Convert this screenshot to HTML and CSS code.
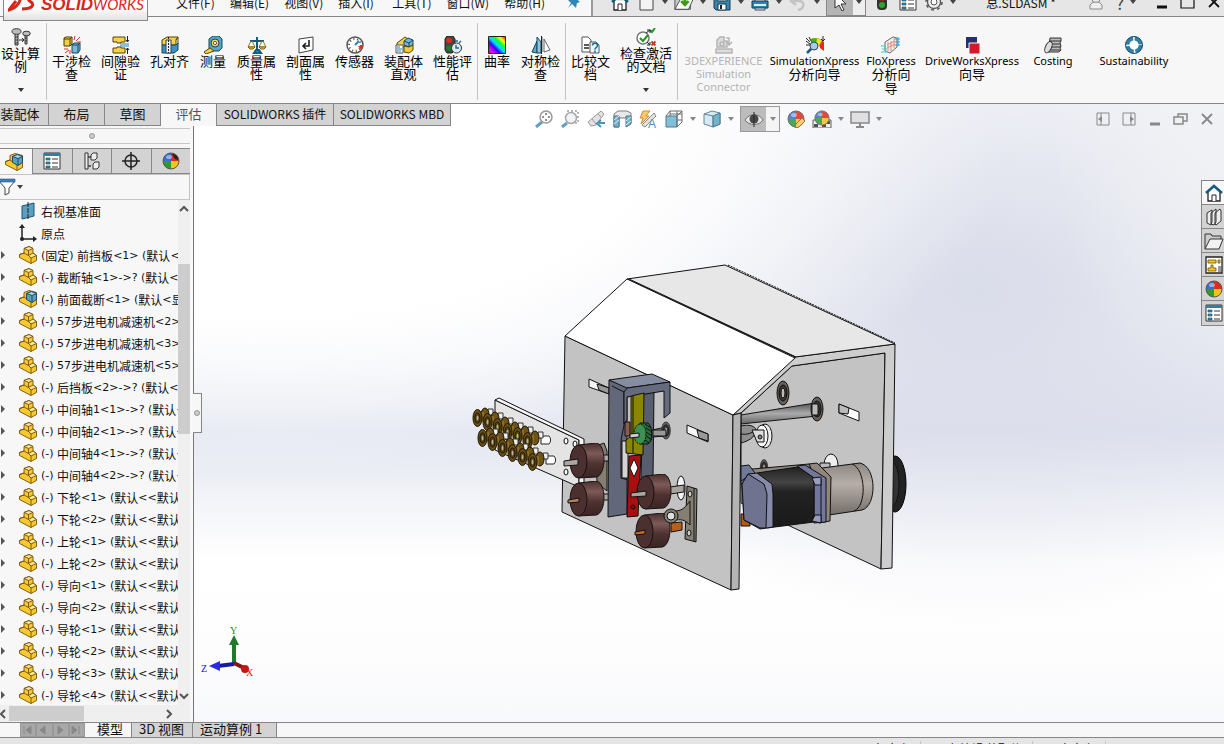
FILE: index.html
```html
<!DOCTYPE html>
<html lang="zh-CN">
<head>
  <meta charset="UTF-8">
  <meta name="viewport" content="width=device-width, initial-scale=1.0">
  <title>SOLIDWORKS - 总.SLDASM</title>
  <link rel="stylesheet" href="styles.css">
</head>
<body>

<!-- Icon sprite -->
<svg class="sprite" aria-hidden="true">
  <defs>
    <linearGradient id="rainbow" x1="0" y1="1" x2="1" y2="0"><stop offset="0" stop-color="#f00"/><stop offset=".15" stop-color="#f0f"/><stop offset=".35" stop-color="#30f"/><stop offset=".5" stop-color="#0df"/><stop offset=".65" stop-color="#0f4"/><stop offset=".8" stop-color="#ff0"/><stop offset="1" stop-color="#f00"/></linearGradient>
    <linearGradient id="drumFill" x1="0" y1="0" x2="0" y2="1"><stop offset="0" stop-color="#4a3030"/><stop offset=".3" stop-color="#7d5a58"/><stop offset=".6" stop-color="#4d3231"/><stop offset="1" stop-color="#3a2424"/></linearGradient>
    <linearGradient id="shaftFill" x1="0" y1="0" x2="0" y2="1"><stop offset="0" stop-color="#555"/><stop offset=".5" stop-color="#aaa"/><stop offset="1" stop-color="#666"/></linearGradient>
    <linearGradient id="gearboxFill" x1="0" y1="0" x2="0" y2="1"><stop offset="0" stop-color="#8c8580"/><stop offset=".4" stop-color="#b5aea9"/><stop offset="1" stop-color="#746d68"/></linearGradient>
    <linearGradient id="motorFill" x1="0" y1="0" x2="0" y2="1"><stop offset="0" stop-color="#222"/><stop offset=".25" stop-color="#444"/><stop offset=".4" stop-color="#222"/><stop offset="1" stop-color="#1a1a1a"/></linearGradient>
  </defs>

  <symbol id="i-bolt" viewBox="0 0 20 18"><g stroke="#333" fill="#bbb"><path d="M4 6v11h3V6M4 9h3M4 12h3M4 15h3M14 7v9h2V7M14 10h2M14 13h2"/><ellipse cx="5.500" cy="3.500" rx="4.500" ry="2.800"/><ellipse cx="15.500" cy="5.500" rx="3.800" ry="2.300"/></g><path d="M8 12h5M11 10l2 2-2 2" stroke="#222" fill="none"/></symbol>
  <symbol id="i-interfere" viewBox="0 0 18 18"><path d="M1 2l2-1h6v7l-2 2H1z" fill="#f4cf45" stroke="#4c3c00"/><path d="M1 3h6v7M7 3l2-2" fill="none" stroke="#4c3c00"/><path d="M9 9l2-2h6v7l-2 3H9z" fill="#78b8d4" stroke="#124761"/><path d="M9 9h6v8M15 9l2-2" fill="none" stroke="#124761"/><path d="M11 4l1-4M13 5l4-4M14 6h4M1 13h4M2 17l4-3M7 14v4" stroke="#e03020"/></symbol>
  <symbol id="i-clear" viewBox="0 0 18 18"><path d="M1 1h12v5H9v1H5V6H1zM1 17v-5h4v-1h4v1h4v5z" fill="#f5d04a" stroke="#5a4500"/><path d="M8 8h9M8 10h9" stroke="#2a85b5"/><path d="M15.500 0v6M14 4l1.500 2L17 4M15.500 18v-6M14 14l1.500-2L17 14" stroke="#222" fill="none"/></symbol>
  <symbol id="i-hole" viewBox="0 0 18 18"><path d="M1 4l5-3h11l-2 3v5H1z" fill="#f5d04a" stroke="#5a4500"/><path d="M1 9h14l2-2v7l-4 3H1z" fill="#3f92b8" stroke="#124761"/><path d="M5 4h5v13H5z" fill="#eef4f7" stroke="#345"/><path d="M7.500 1v16" stroke="#222" stroke-dasharray="2 1"/><path d="M15 4l2-3v7" fill="none" stroke="#5a4500"/></symbol>
  <symbol id="i-tape" viewBox="0 0 18 18"><path d="M5 3l4-3h6l3 3v9l-3 3H5z" fill="#5aa3c5" stroke="#124761"/><circle cx="11" cy="7" r="4" fill="#f3d36a" stroke="#124761"/><circle cx="11" cy="7" r="1.600" fill="#fff" stroke="#555"/><path d="M6 12l-6 4 2 2 8-3z" fill="#f5d04a" stroke="#5a4500"/></symbol>
  <symbol id="i-scale" viewBox="0 0 18 18"><path d="M9 1v14M2 5h14M6 17h7l-2-3H8z" stroke="#145b80" stroke-width="2" fill="#3f92b8"/><path d="M3 5L0 11h7L4 5M14 5l-3 6h7l-3-6" fill="none" stroke="#9a7a20"/><path d="M0 11h7l-2 2H2zM11 11h7l-2 2h-3z" fill="#f5d04a" stroke="#7a5c00"/></symbol>
  <symbol id="i-section" viewBox="0 0 18 18"><path d="M2 3l14-2v13L2 17z" fill="#fff" stroke="#444"/><path d="M12 4v6H7M9 7l-3 3 3 3" fill="none" stroke="#222" stroke-width="1.600"/></symbol>
  <symbol id="i-gauge" viewBox="0 0 18 18"><circle cx="9" cy="9" r="8" fill="#fff" stroke="#555" stroke-width="1.500"/><circle cx="9" cy="9" r="6" fill="none" stroke="#444" stroke-dasharray="1 2.700" stroke-width="2"/><path d="M9 9l4-4" stroke="#1d84b5" stroke-width="2"/><path d="M12 10h5l-2 4z" fill="#e03020"/></symbol>
  <symbol id="i-visual" viewBox="0 0 18 18"><path d="M6 4l4-3 3 2v8H2V7z" fill="#f5d04a" stroke="#5a4500"/><path d="M9 5l4-3 5 2v5l-4 2-5-2z" fill="#78b8d4" stroke="#124761"/><path d="M9 5l5 2v4M14 7l4-3" fill="none" stroke="#124761"/><path d="M9 10l5 1 4-2v5l-4 3-5-1z" fill="#f5c83a" stroke="#5a4500"/><path d="M1 9h7v8H1z" fill="#fff" stroke="#555"/><path d="M2 11h3M2 13h5M2 15h4" stroke="#1d84b5"/></symbol>
  <symbol id="i-perf" viewBox="0 0 18 18"><path d="M3 0h6l2 3v11l-3 3H3l-2-3V3z" fill="#444" stroke="#222"/><circle cx="5" cy="4.500" r="2.800" fill="#e02a1a"/><circle cx="5" cy="12" r="2.800" fill="#16831e"/><circle cx="12.500" cy="12" r="5" fill="#dcecf3" stroke="#333"/><path d="M12 9v3h3M11 5h3M15 7l2-2" stroke="#1b6a90" stroke-width="1.500" fill="none"/></symbol>
  <symbol id="i-curv" viewBox="0 0 18 18"><path d="M.5.500h17v17h-17z" fill="url(#rainbow)" stroke="#222"/></symbol>
  <symbol id="i-mirror" viewBox="0 0 20 18"><path d="M1 16L6 5v12z" fill="#5fa8c9" stroke="#124761"/><path d="M6 17V1l4 5v11z" fill="#8fc4dc" stroke="#124761"/><path d="M11 1v15M13 3v13l6-2z" fill="#fff" stroke="#666"/><path d="M10.500 0v18" stroke="#222"/></symbol>
  <symbol id="i-compare" viewBox="0 0 20 18"><path d="M1 1h6l3 3v12H1z" fill="#fff" stroke="#555"/><path d="M9 6h6l3 3v8H9z" fill="#eef4f7" stroke="#555"/><path d="M3 9h5M3 12h5" stroke="#222" stroke-width="1.500"/><path d="M11.500 9.500c0-3 5-3 5 0 0 2-2.500 2-2.500 4M14 14.500v2" fill="none" stroke="#0f6e9e" stroke-width="1.600"/></symbol>
  <symbol id="i-active" viewBox="0 0 20 18"><circle cx="7" cy="10" r="6" fill="#fff" stroke="#777" stroke-width="1.500"/><path d="M4 10l3 3 5-6M14 2l2 2 3-4" fill="none" stroke="#1f951f" stroke-width="2"/><path d="M10 5l4-3M11 14l3 3M11 2h3v3M14 14v3h-3" stroke="#222" fill="none"/><path d="M15.500 13.500l4 4M19.500 13.500l-4 4" stroke="#d8301c" stroke-width="1.800"/></symbol>
  <symbol id="i-3dx" viewBox="0 0 18 18"><g fill="#ddd" stroke="#b5b5b5" stroke-width="1.500"><path d="M2 4l3-3h4v4h3v6H2zM1 13h16v4H1z"/><path d="M11 2h3v6M12 6l2 3 3-3" fill="none"/><circle cx="7" cy="8" r="2"/></g></symbol>
  <symbol id="i-simx" viewBox="0 0 20 18"><path d="M6 3c5-2 9-1 13 3v9l-4-3c0-4-3-5-9-4z" fill="#e52a1a"/><path d="M6 3c5-2 8-1 11 1.500l-3 5.500-8-2z" fill="#f5e01a"/><path d="M6 3c2-1 4-1 6-.5L11 8H6z" fill="#35b52c"/><path d="M18 0v4M16 3l2 2 2-2M1 2l4 4M1 5l4 3M1 9h4M4 1l2 4" stroke="#222" fill="none"/><circle cx="9" cy="10" r="4" fill="#a9cbe8" stroke="#345"/><path d="M6 13l-4 4" stroke="#145b80" stroke-width="2.500"/></symbol>
  <symbol id="i-flox" viewBox="0 0 20 18"><path d="M4 6l8-5 4 1v9l-7 6-5-2z" fill="#f2f2f2" stroke="#666"/><path d="M7 6v9M10 5v10M13 3v9M6 9l8-4M6 12l8-4" stroke="#e08a7a"/><path d="M13 3h6M14 6h5M14 9h5M17 1v9" stroke="#2aa0e0"/><path d="M0 10h5M1 13h5M0 16h6" stroke="#3cc"/></symbol>
  <symbol id="i-drive" viewBox="0 0 18 18"><path d="M3 1h11v11H3z" fill="#25306f"/><path d="M6 7h11v11H6z" fill="#d5172c" stroke="#f7f7f7"/></symbol>
  <symbol id="i-cost" viewBox="0 0 20 18"><path d="M7 2h11v3l-1 2 1 3-1 2 1 2-2 2H5z" fill="#bbb" stroke="#333"/><path d="M7 5h11M8 8h9M7 11h11M8 14h9" stroke="#333"/><ellipse cx="5.500" cy="11" rx="3" ry="6" transform="rotate(25 5 11)" fill="#ddd" stroke="#333"/></symbol>
  <symbol id="i-sust" viewBox="0 0 18 18"><circle cx="9" cy="9" r="6.500" fill="#fff" stroke="#2f7fa8" stroke-width="4" stroke-dasharray="8.500 1.700"/><circle cx="9" cy="9" r="8.500" fill="none" stroke="#174861"/><path d="M9 4l2 3 3 2-3 2-2 3-2-3-3-2 3-2z" fill="#fff"/></symbol>

  <symbol id="i-zoom" viewBox="0 0 18 18"><path d="M1 17l6-5" stroke="#4b8fb0" stroke-width="3"/><circle cx="11" cy="7" r="6" fill="#fafafa" stroke="#888" stroke-width="1.500"/><path d="M11 3v2M11 9v2M7 7h2M13 7h2" stroke="#555" stroke-width="1.500"/></symbol>
  <symbol id="i-zoomarea" viewBox="0 0 18 18"><path d="M6 1h11v12h-3" fill="none" stroke="#555" stroke-dasharray="2 2"/><path d="M1 17l5-4" stroke="#4b8fb0" stroke-width="3"/><circle cx="10" cy="8" r="5.500" fill="#eef3f5" stroke="#999" stroke-width="1.500"/></symbol>
  <symbol id="i-prev" viewBox="0 0 18 18"><path d="M1 12L14 1l3 3-8 11-5 1z" fill="#ddd" stroke="#888"/><path d="M5 9l4 5M11 4l3 3" stroke="#888"/><path d="M18 13h-6M14 10l-4 3.500 4 3.500" fill="none" stroke="#2f7fa8" stroke-width="2"/></symbol>
  <symbol id="i-cut" viewBox="0 0 18 18"><path d="M1 4l4-3h9l4 2v10l-4 3v-8H6v9H1z" fill="#e4e4e4" stroke="#666"/><path d="M1 6h5v11H1zM13 6h5v8l-5 3z" fill="#5ca5c5" stroke="#2b6380"/><path d="M1 10l5-4M1 14l5-4M13 11l5-4M13 15l5-4" stroke="#dcecf3"/></symbol>
  <symbol id="i-annot" viewBox="0 0 18 18"><path d="M4 1h7L7 6h3l-8 8 2-6H1z" fill="#f6c050" stroke="#c87a20"/><path d="M3 15L15 3l2 3L6 17z" fill="#ddd" stroke="#777"/><text x="9" y="18" font-size="12" font-family="Liberation Sans" fill="#2f7fa8">A</text></symbol>
  <symbol id="i-orient" viewBox="0 0 18 18"><path d="M1 6h11v11H1z" fill="#6fb3d0" stroke="#2b6380"/><path d="M1 6l4-5h12v11l-5 5M12 6l5-5M5 1v5M12 1v16M5 4h12M12 10h5" fill="none" stroke="#555"/></symbol>
  <symbol id="i-style" viewBox="0 0 18 18"><path d="M1 4l8-3 8 2v11l-7 3-9-3z" fill="#cfe6f0" stroke="#4c7287"/><path d="M10 6l7-3v11l-7 3z" fill="#5ca5c5" stroke="#2b6380"/><path d="M1 4l9 2v11" fill="none" stroke="#4c7287"/></symbol>
  <symbol id="i-eye" viewBox="0 0 18 18"><path d="M0 10c4-7 14-7 18 0-4 6-14 6-18 0z" fill="#eee" stroke="#666"/><circle cx="9" cy="9" r="4.500" fill="#333"/><path d="M9 2v15" stroke="#111"/></symbol>
  <symbol id="i-ball" viewBox="0 0 18 18"><path d="M9 9V1a8 8 0 0 0-8 8z" fill="#3a6fd0"/><path d="M9 9V1a8 8 0 0 1 8 8z" fill="#df2a1c"/><path d="M9 9H1a8 8 0 0 0 8 8z" fill="#2d9a35"/><path d="M9 9h8a8 8 0 0 1-8 8z" fill="#f3c421"/><circle cx="9" cy="9" r="8" fill="none" stroke="#555"/><ellipse cx="7" cy="5" rx="3" ry="2" fill="#fff" opacity=".45"/></symbol>
  <symbol id="i-ballhole" viewBox="0 0 18 18"><use href="#i-ball"/><path d="M10 2c3 0 6 2 6 6l-3-1z" fill="#222"/></symbol>
  <symbol id="i-appear" viewBox="0 0 18 18"><use href="#i-ball"/><path d="M8 18l1-4 6-6 3 3-6 6z" fill="#f6c860" stroke="#8a5a10"/></symbol>
  <symbol id="i-scene" viewBox="0 0 18 18"><path d="M0 10h18v8H0z" fill="#eee" stroke="#444"/><path d="M1 14h4v3H1zM9 14h4v3H9zM14 11h3v3h-3z" fill="#333"/><use href="#i-ball" x="1" width="16" height="16"/></symbol>
  <symbol id="i-monitor" viewBox="0 0 18 18"><path d="M0 2h18v11H0z" fill="#ddd" stroke="#777" stroke-width="1.500"/><path d="M9 13v3M5 17h8" stroke="#777" stroke-width="2"/></symbol>

  <symbol id="i-home" viewBox="0 0 18 18"><path d="M3 8v9h12V8" fill="#fff" stroke="#222" stroke-width="1.300"/><path d="M7 17v-6h4v6" fill="#fff" stroke="#222"/><path d="M1 9l8-7 8 7" fill="none" stroke="#145b80" stroke-width="2.500"/></symbol>
  <symbol id="i-new" viewBox="0 0 18 18"><path d="M3 1h9l4 4v12H3z" fill="#f4f4f4" stroke="#444"/></symbol>
  <symbol id="i-open" viewBox="0 0 22 18"><path d="M1 17V4h7l1 2h9v11z" fill="#ccc" stroke="#444"/><path d="M1 17L7 6h14l-5 11z" fill="#fafafa" stroke="#444"/><path d="M12 3v8M8 8l4 4 4-4" stroke="#3a9a10" stroke-width="3" fill="none"/></symbol>
  <symbol id="i-save" viewBox="0 0 18 18"><path d="M1 1h16v16H3l-2-2z" fill="#3b84a8" stroke="#123c52"/><path d="M4 1h10v7H4z" fill="#e8e8e8" stroke="#123c52"/><path d="M5 11h8v6H5z" fill="#fff" stroke="#123c52"/><path d="M7 12h2v4H7z" fill="#222"/></symbol>
  <symbol id="i-print" viewBox="0 0 18 18"><path d="M4 2h10v7H4zM4 14h10v3H4z" fill="#fff" stroke="#345"/><path d="M1 8h16v7H1z" fill="#2f86ad" stroke="#123c52"/><path d="M3 12h12" stroke="#d8eef7" stroke-width="2"/></symbol>
  <symbol id="i-undo" viewBox="0 0 18 18"><path d="M9 17c7-1 7-9 1-9H3M7 4L2 8l5 4" fill="none" stroke="#c4c4c4" stroke-width="2.500"/></symbol>
  <symbol id="i-cursor" viewBox="0 0 18 18"><path d="M4 0v15l4-3 3 6 2-1-3-6h5z" fill="#fff" stroke="#333"/></symbol>
  <symbol id="i-light" viewBox="0 0 18 18"><rect x="4" y="-4" width="10" height="21" rx="4" fill="#333"/><circle cx="9" cy="5" r="3" fill="#a22"/><circle cx="9" cy="12" r="3" fill="#27a827"/></symbol>
  <symbol id="i-list" viewBox="0 0 18 18"><path d="M1 1h16v16H1z" fill="#fff" stroke="#333"/><path d="M1 2.500h16" stroke="#2f7fa8" stroke-width="3"/><path d="M3 6h4v2H3zM3 10h4v2H3zM3 14h4v2H3z" fill="#3f92b8" stroke="#123c52" stroke-width=".6"/><path d="M9 7h6M9 11h6M9 15h6" stroke="#333"/></symbol>
  <symbol id="i-gear" viewBox="0 0 18 18"><circle cx="9" cy="9" r="6.500" fill="#eee" stroke="#555" stroke-width="1.300"/><circle cx="9" cy="9" r="8" fill="none" stroke="#555" stroke-width="1.500" stroke-dasharray="3 3.280"/><circle cx="9" cy="9" r="3" fill="#fff" stroke="#555"/></symbol>
  <symbol id="i-pin" viewBox="0 0 14 18"><path d="M5 3l7 6-3 1-1 5-4-4-4 4 3-5-3-3 5-1z" fill="#2f86b5"/></symbol>
  <symbol id="i-user" viewBox="0 0 18 18"><circle cx="9" cy="6" r="4" fill="#eee" stroke="#888"/><path d="M3 16v-4c2-4 10-4 12 0v4z" fill="#eee" stroke="#888"/></symbol>
  <symbol id="i-min" viewBox="0 0 18 18"><path d="M4 14h10" stroke="currentColor" stroke-width="3"/></symbol>
  <symbol id="i-max" viewBox="0 0 18 18"><path d="M2 3h13v12H2z" fill="none" stroke="currentColor" stroke-width="1.200"/></symbol>
  <symbol id="i-close" viewBox="0 0 18 18"><path d="M4 4l10 10M14 4L4 14" stroke="currentColor" stroke-width="1.800"/></symbol>
  <symbol id="i-restore" viewBox="0 0 18 18"><path d="M2 7h9v7H2zM6 7V4h9v7h-4" fill="none" stroke="currentColor" stroke-width="1.500"/></symbol>
  <symbol id="i-dockl" viewBox="0 0 18 18"><path d="M3 3h12v12H3zM7 3v12" fill="none" stroke="currentColor"/><path d="M8 6v6L4 9z" fill="currentColor"/></symbol>
  <symbol id="i-dockr" viewBox="0 0 18 18"><path d="M3 3h12v12H3zM11 3v12" fill="none" stroke="currentColor"/><path d="M10 6v6l4-3z" fill="currentColor"/></symbol>

  <symbol id="i-part" viewBox="0 0 18 18"><g stroke="#6f5210" stroke-width=".9" stroke-linejoin="round"><path d="M.5 8.500L5 7V2.500L10 .5l4 2V7l3.500 2.500v5L12 17.500.5 11.500z" fill="#f7c92c"/><path d="M5 2.500L10 .5l4 2-4.500 2z" fill="#fbe48a"/><path d="M9.500 9.500L14 7l3.500 2.500L12 12z" fill="#fbe48a"/><path d="M.5 8.500L5 7l4.500 2.500M9.500 4.500v5L12 12v5.500" fill="none"/></g></symbol>
  <symbol id="i-asm" viewBox="0 0 18 18"><g stroke="#6f5210" stroke-width=".9" stroke-linejoin="round"><path d="M.5 8.500L5 7V2.500L10 .5l7.500 2v12L12 17.500.5 11.500z" fill="#f7c92c"/><path d="M.5 8.500L5 7l7 5v5.500" fill="none"/></g><g stroke="#124761" stroke-width=".9"><path d="M7.500 3.500l5-2 5 2v6l-4.500 3-5.500-3z" fill="#5b9fc0"/><path d="M7.500 3.500l5-2 5 2-4.500 2z" fill="#a9d3e6"/><path d="M13 5.500v7" fill="none"/></g></symbol>
  <symbol id="i-plane" viewBox="0 0 18 18"><path d="M3 4l12-3v13L3 17z" fill="#5b9fbe" stroke="#1b5472"/><path d="M9 0v18" stroke="#222" stroke-dasharray="5 1"/></symbol>
  <symbol id="i-origin" viewBox="0 0 18 18"><path d="M3 3v12h13" fill="none" stroke="#222" stroke-width="1.500"/><path d="M0 4l3-4 3 4zM14 12l4 3-4 3z" fill="#222"/><circle cx="3" cy="15" r="2" fill="#222"/></symbol>
  <symbol id="i-config" viewBox="0 0 18 18"><path d="M3 1v16M3 5h5M3 14h5" stroke="#444" stroke-width="1.500" fill="none"/><path d="M2 1h3v16H2zM8 3l2-2h4v5l-2 2H8zM10 12l2-2h4v5l-2 2h-4z" fill="#eee" stroke="#333"/></symbol>
  <symbol id="i-target" viewBox="0 0 18 18"><circle cx="9" cy="9" r="6" fill="none" stroke="#222" stroke-width="1.500"/><path d="M9 0v18M0 9h18" stroke="#222" stroke-width="1.500"/></symbol>
  <symbol id="i-filter" viewBox="0 0 18 18"><path d="M1 3h16l-6 7v5l-4 2v-7z" fill="#fff" stroke="#444"/><path d="M1 1h16v3H1z" fill="#2f8ab5" stroke="#145b80" stroke-width=".6"/></symbol>
  <symbol id="i-books" viewBox="0 0 18 18"><path d="M2 5l5-3v12l-1 3-4-2zM6 5l5-4v13l-2 3-3-1zM10 5l5-4 1 2v10l-5 4-1-1z" fill="#eee" stroke="#333"/></symbol>
  <symbol id="i-folder" viewBox="0 0 20 18"><path d="M1 17V2h6l1 2h9v3" fill="#ccc" stroke="#333"/><path d="M1 17L6 7h13l-4 10z" fill="#f2f2f2" stroke="#333"/></symbol>
  <symbol id="i-palette" viewBox="0 0 18 18"><path d="M1 1h16v16H1z" fill="#fff" stroke="#222" stroke-width="1.300"/><path d="M3 4h8v3H3zM13 4h2v3h-2zM3 15v-3h3V9h2v3h3v3z" fill="#f5c71e" stroke="#6b4c00" stroke-width=".8"/><path d="M13 10h3v6h-3z" fill="#999"/></symbol>

  <symbol id="m-roller" viewBox="0 0 22 20" overflow="visible"><path d="M15 1h5v6h-5z" fill="#eee" stroke="#333"/><ellipse cx="12" cy="7" rx="4" ry="7" fill="#6e5418" stroke="#1c1504"/><path d="M5 5l6-1v9l-6 2z" fill="#8f7022"/><ellipse cx="4.500" cy="10" rx="4.500" ry="8.500" fill="#6a5015" stroke="#1c1504"/><ellipse cx="4.500" cy="10" rx="2.500" ry="5" fill="#54400f" stroke="#1c1504"/><ellipse cx="4.500" cy="10" rx="1" ry="2.500" fill="#b7b2a4"/></symbol>
  <symbol id="m-drum" viewBox="0 0 35 36"><path d="M9 2l18-2c10 2 10 31 0 34L9 35z" fill="url(#drumFill)" stroke="#1c1010"/><ellipse cx="9" cy="18.500" rx="8.500" ry="16.500" fill="#4b302f" stroke="#1c1010"/></symbol>
  <symbol id="m-bearing" viewBox="0 0 14 26"><ellipse cx="7" cy="13" rx="6" ry="12" fill="#665f58" stroke="#111"/><ellipse cx="7" cy="13" rx="4" ry="8" fill="#3a3633" stroke="#111"/><ellipse cx="7" cy="13" rx="2" ry="5" fill="#bbb" stroke="#111"/></symbol>
</svg>

<header class="titlebar">
  <a class="brand" href="#" aria-label="SOLIDWORKS">
    <svg width="30" height="20" viewBox="0 0 30 20" fill="none" stroke="#d9261c" stroke-width="3"><path d="M4 2c8-1 10 3 6 8-2 3-5 5-9 6L8 7M28 2c-8 0-10 3-5 6 4 3 1 7-9 7"/></svg>
    <span><b>SOLID</b><i>WORKS</i></span>
  </a>
  <nav class="menu">
    <a href="#">文件(F)</a>
    <a href="#">编辑(E)</a>
    <a href="#">视图(V)</a>
    <a href="#">插入(I)</a>
    <a href="#">工具(T)</a>
    <a href="#">窗口(W)</a>
    <a href="#">帮助(H)</a>
    <button aria-label="固定"><svg class="ico"><use href="#i-pin"/></svg></button>
  </nav>
  <div class="quickbar">
    <button aria-label="主页"><svg class="ico"><use href="#i-home"/></svg></button>
    <button class="drop" aria-label="新建"><svg class="ico"><use href="#i-new"/></svg></button>
    <button class="drop" aria-label="打开"><svg class="ico"><use href="#i-open"/></svg></button>
    <button class="drop" aria-label="保存"><svg class="ico"><use href="#i-save"/></svg></button>
    <button class="drop" aria-label="打印"><svg class="ico"><use href="#i-print"/></svg></button>
    <button class="drop" aria-label="撤销"><svg class="ico"><use href="#i-undo"/></svg></button>
    <button class="drop pressed" aria-label="选择"><svg class="ico"><use href="#i-cursor"/></svg></button>
    <button aria-label="重建模型"><svg class="ico"><use href="#i-light"/></svg></button>
    <button aria-label="文件属性"><svg class="ico"><use href="#i-list"/></svg></button>
    <button class="drop" aria-label="选项"><svg class="ico"><use href="#i-gear"/></svg></button>
    <span class="doc-name">总.SLDASM *</span>
    <div class="window-btns">
      <button aria-label="登录"><svg class="ico"><use href="#i-user"/></svg></button>
      <button class="drop help" aria-label="帮助">?</button>
      <button aria-label="最小化"><svg class="ico"><use href="#i-min"/></svg></button>
      <button aria-label="最大化"><svg class="ico"><use href="#i-max"/></svg></button>
      <button aria-label="关闭"><svg class="ico"><use href="#i-close"/></svg></button>
    </div>
  </div>
</header>

<section class="ribbon">
  <div class="group">
    <button class="cmd tall first"><svg class="ico"><use href="#i-bolt"/></svg>设计算<br>例</button>
  </div>
  <div class="group">
    <button class="cmd"><svg class="ico"><use href="#i-interfere"/></svg>干涉检<br>查</button>
    <button class="cmd"><svg class="ico"><use href="#i-clear"/></svg>间隙验<br>证</button>
    <button class="cmd"><svg class="ico"><use href="#i-hole"/></svg>孔对齐</button>
    <button class="cmd narrow"><svg class="ico"><use href="#i-tape"/></svg>测量</button>
    <button class="cmd"><svg class="ico"><use href="#i-scale"/></svg>质量属<br>性</button>
    <button class="cmd"><svg class="ico"><use href="#i-section"/></svg>剖面属<br>性</button>
    <button class="cmd"><svg class="ico"><use href="#i-gauge"/></svg>传感器</button>
    <button class="cmd"><svg class="ico"><use href="#i-visual"/></svg>装配体<br>直观</button>
    <button class="cmd"><svg class="ico"><use href="#i-perf"/></svg>性能评<br>估</button>
  </div>
  <div class="group">
    <button class="cmd narrow"><svg class="ico"><use href="#i-curv"/></svg>曲率</button>
    <button class="cmd"><svg class="ico"><use href="#i-mirror"/></svg>对称检<br>查</button>
  </div>
  <div class="group">
    <button class="cmd"><svg class="ico"><use href="#i-compare"/></svg>比较文<br>档</button>
    <button class="cmd tall wide"><svg class="ico"><use href="#i-active"/></svg>检查激活<br>的文档</button>
  </div>
  <div class="group">
    <button class="cmd latin addin" disabled><svg class="ico"><use href="#i-3dx"/></svg>3DEXPERIENCE<br>Simulation<br>Connector</button>
    <button class="cmd latin addin"><svg class="ico"><use href="#i-simx"/></svg>SimulationXpress<br><span class="zh">分析向导</span></button>
    <button class="cmd latin wide"><svg class="ico"><use href="#i-flox"/></svg>FloXpress<br><span class="zh">分析向<br>导</span></button>
    <button class="cmd latin widest"><svg class="ico"><use href="#i-drive"/></svg>DriveWorksXpress<br><span class="zh">向导</span></button>
    <button class="cmd latin wide"><svg class="ico"><use href="#i-cost"/></svg>Costing</button>
    <button class="cmd latin widest"><svg class="ico"><use href="#i-sust"/></svg>Sustainability</button>
  </div>
</section>

<main class="workspace">
  <nav class="cm-tabs">
    <a href="#">装配体</a>
    <a href="#">布局</a>
    <a href="#">草图</a>
    <a href="#" class="active">评估</a>
    <a href="#" class="long">SOLIDWORKS 插件</a>
    <a href="#" class="long">SOLIDWORKS MBD</a>
  </nav>

  <div class="heads-up">
    <button aria-label="整屏显示全图"><svg class="ico"><use href="#i-zoom"/></svg></button>
    <button aria-label="局部放大"><svg class="ico"><use href="#i-zoomarea"/></svg></button>
    <button aria-label="上一视图"><svg class="ico"><use href="#i-prev"/></svg></button>
    <button aria-label="剖面视图"><svg class="ico"><use href="#i-cut"/></svg></button>
    <button aria-label="动态注解视图"><svg class="ico"><use href="#i-annot"/></svg></button>
    <button class="drop" aria-label="视图定向"><svg class="ico"><use href="#i-orient"/></svg></button>
    <button class="drop" aria-label="显示样式"><svg class="ico"><use href="#i-style"/></svg></button>
    <button class="drop pressed" aria-label="隐藏/显示项目"><svg class="ico"><use href="#i-eye"/></svg></button>
    <button aria-label="编辑外观"><svg class="ico"><use href="#i-appear"/></svg></button>
    <button class="drop" aria-label="应用布景"><svg class="ico"><use href="#i-scene"/></svg></button>
    <button class="drop" aria-label="视图设定"><svg class="ico"><use href="#i-monitor"/></svg></button>
  </div>

  <div class="doc-btns">
    <button aria-label="左侧面板"><svg class="ico"><use href="#i-dockl"/></svg></button>
    <button aria-label="右侧面板"><svg class="ico"><use href="#i-dockr"/></svg></button>
    <button aria-label="最小化文档"><svg class="ico"><use href="#i-min"/></svg></button>
    <button aria-label="还原文档"><svg class="ico"><use href="#i-restore"/></svg></button>
    <button aria-label="关闭文档"><svg class="ico"><use href="#i-close"/></svg></button>
  </div>

  <div class="columns">
    <aside class="sidebar">
      <div class="grip"><span></span></div>
      <div class="panel-tabs">
        <button class="active" aria-label="特征树"><svg class="ico"><use href="#i-asm"/></svg></button>
        <button aria-label="属性"><svg class="ico"><use href="#i-list"/></svg></button>
        <button aria-label="配置"><svg class="ico"><use href="#i-config"/></svg></button>
        <button aria-label="尺寸专家"><svg class="ico"><use href="#i-target"/></svg></button>
        <button aria-label="外观"><svg class="ico"><use href="#i-ballhole"/></svg></button>
      </div>
      <div class="filter"><button class="drop" aria-label="过滤"><svg class="ico"><use href="#i-filter"/></svg></button></div>
      <div class="tree-wrap">
        <ul class="tree" id="tree"></ul>
        <div class="vscroll">
          <svg viewBox="0 0 12 12"><path d="M2 8l4-4 4 4"/></svg>
          <div class="track"><div class="thumb"></div></div>
          <svg viewBox="0 0 12 12"><path d="M2 4l4 4 4-4"/></svg>
        </div>
      </div>
      <div class="hscroll">
        <svg viewBox="0 0 12 12"><path d="M5 2L1 6l4 4"/></svg>
        <div class="thumb"></div>
        <svg viewBox="0 0 12 12"><path d="M4 2l4 4-4 4"/></svg>
      </div>
    </aside>

    <div class="viewport">
      <button class="handle" aria-label="折叠面板"><span></span></button>

      <svg class="model" viewBox="194 126 1030 596" stroke-linejoin="round">
        <!-- pulley behind the rear plate -->
        <ellipse cx="895" cy="484" rx="11" ry="28" fill="#222" stroke="#000"/>
        <ellipse cx="892" cy="484" rx="7" ry="22" fill="#333" stroke="#111"/>

        <!-- housing -->
        <g stroke="#111">
          <path d="M741 413L792 366 885 353 881 569 741 503z" fill="#c3c3c3"/>
          <path d="M733 415L795 357 895 344 892 568 881 569 885 353 792 366 741 413z" fill="#cdcdcd"/>
          <path d="M627 279L725 265 895 344 795 357z" fill="#e7e7e7"/>
          <path d="M728 265L895 343" stroke-dasharray="2 1"/>
        </g>

        <!-- shafts and bearings inside -->
        <g stroke="#111">
          <use href="#m-bearing" x="776" y="380" width="14" height="26"/>
          <path d="M741 415L815 403 817 416 741 424z" fill="url(#shaftFill)"/>
          <use href="#m-bearing" x="810" y="396" width="14" height="26"/>
          <path d="M812 404h6v11h-6z" fill="#bbb"/>
          <path d="M741 426c8-2 14 0 15 4-1 8-8 11-15 13z" fill="#8e8e8e"/>
          <path d="M741 434c6 1 11-1 15-4" fill="none"/>
          <ellipse cx="765" cy="436" rx="7" ry="12" fill="#eee"/>
          <ellipse cx="762" cy="436" rx="6" ry="11" fill="#f6f6f6"/>
          <path d="M752 430h12v12h-7z" fill="#ddd"/>
          <circle cx="760" cy="437" r="2" fill="#888"/>
          <path d="M839 404L859 412V421L839 413z" fill="#fff"/>
          <path d="M839 404L849 408 848 414 839 413z" fill="#bbb"/>
          <use href="#m-bearing" x="758" y="459" width="12" height="16"/>
          <ellipse cx="831" cy="465" rx="7" ry="11" fill="#eee"/>
          <path d="M820 463h10v8h-10z" fill="#bbb"/>
        </g>

        <!-- stepper motor with gearbox -->
        <g stroke="#111">
          <path d="M741 514h9v12h-9z" fill="#b45a14"/>
          <path d="M741 470L809 464 815 466 760 478 741 484z" fill="#8e857c"/>
          <path d="M741 466l8-1 6 8-14 8z" fill="#6e7a9a"/>
          <path d="M822 468L860 463c17 4 17 43 2 47L829 515z" fill="url(#gearboxFill)"/>
          <path d="M852 464c14 5 15 42 2 47" fill="none"/>
          <path d="M809 464L817 463 831 477 830 521 819 523 815 478z" fill="#8f857c"/>
          <path d="M797 466L805 465 826 478 826 522 814 523 814 478z" fill="#72779c"/>
          <path d="M821 479v43" fill="none"/>
          <path d="M757 473L798 467 814 478 814 522 767 528 770 493z" fill="url(#motorFill)"/>
          <path d="M748 474L757 473 772 484 773 494 773 527 760 529 744 520 742 484z" fill="#868baa"/>
          <path d="M748 474L764 484 767 494 766 528 760 528 744 520 742 484z" fill="#6f738f"/>
          <path d="M812 478l3 7h6v-8zM812 521l3-6h6v8z" fill="#989dc0"/>
        </g>

        <!-- front plate and sloped cover -->
        <g stroke="#111">
          <path d="M565 336L733 415 731 590 562 512z" fill="#c3c3c3"/>
          <path d="M733 415L741 413 739 589 731 590z" fill="#b4b4b4"/>
          <path d="M565 336L627 279 795 358 733 415z" fill="#fff"/>
          <path d="M629 279L796 357"/>
          <path d="M589 379L609 388V394L589 387zM687 425L708 434V442L687 433z" fill="#f4f4f4"/>
          <path d="M597 384l12 4v6l-10-4zM697 430l11 4v7l-9-3z" fill="#999"/>
        </g>

        <!-- roller plate -->
        <g stroke="#111">
          <path d="M495 400L579 440V487L495 450z" fill="#e4e4e4"/>
          <path d="M495 400L499 398 584 439V486L579 487V440z" fill="#f6f6f6"/>
          <ellipse cx="566" cy="441" rx="2" ry="3" fill="#fff"/>
          <ellipse cx="566" cy="472" rx="2" ry="3" fill="#fff"/>
          <ellipse cx="575" cy="444" rx="2" ry="3" fill="#fff"/>
        </g>
        <g>
          <path d="M541 436h8c2 2 2 6 0 8h-8zM546 456h8c2 2 2 6 0 8h-8z" fill="#fff" stroke="#222"/>
          <use href="#m-roller" x="473" y="408" width="22" height="20"/>
          <use href="#m-roller" x="483" y="412" width="22" height="20"/>
          <use href="#m-roller" x="493" y="417" width="22" height="20"/>
          <use href="#m-roller" x="503" y="422" width="22" height="20"/>
          <use href="#m-roller" x="513" y="426" width="22" height="20"/>
          <use href="#m-roller" x="523" y="431" width="22" height="20"/>
          <use href="#m-roller" x="478" y="428" width="22" height="20"/>
          <use href="#m-roller" x="488" y="432" width="22" height="20"/>
          <use href="#m-roller" x="498" y="438" width="22" height="20"/>
          <use href="#m-roller" x="508" y="443" width="22" height="20"/>
          <use href="#m-roller" x="518" y="447" width="22" height="20"/>
          <use href="#m-roller" x="528" y="452" width="22" height="20"/>
        </g>

        <!-- left drums -->
        <g stroke="#111">
          <path d="M596 446l8-3 3 8v40l-10-8z" fill="#857f73"/>
          <path d="M602 455h8v6h-8zM602 494h8v6h-8z" fill="#aaa"/>
          <use href="#m-drum" x="569" y="443" width="36" height="36"/>
          <use href="#m-drum" x="569" y="481" width="36" height="36"/>
          <path d="M564 461l14-2v6l-14 1z" fill="#aca5a0"/>
          <path d="M568 500l11-2v4l-11 1z" fill="#b98154"/>
        </g>

        <!-- slide bracket -->
        <g stroke="#111">
          <path d="M643 392L654 390 653 477 641 480z" fill="#585e6e"/>
          <path d="M609 380L627 387 663 385 663 390 627 397V514L608 517z" fill="#626879"/>
          <path d="M612 386L624 392 624 425 621 440V478L628 480V500" fill="none"/>
          <path d="M622 441h6v37h-6z" fill="#d3d3d3"/>
          <path d="M609 380L652 374 670 382 627 388z" fill="#878da0"/>
          <path d="M627 388L670 382V413L664 418V391L627 397V420L624 424V392z" fill="#666c7e"/>
          <path d="M631 396L644 393 643 455 626 453V440L631 436z" fill="#8a8600"/>
          <path d="M633 396v57" fill="none"/>
          <path d="M625 422h5v14h-5z" fill="#8a5d46"/>
          <path d="M629 456L641 455 638 516 627 517z" fill="#a80f0f"/>
          <path d="M634 459L638 468 634 477 630 468z" fill="#fff"/>
          <circle cx="633" cy="507" r="2" fill="#711"/>
          <path d="M652 430l14-3v9l-14 1z" fill="#aaa"/>
          <use href="#m-bearing" x="661" y="421" width="10" height="19"/>
          <path d="M653 430h13v6h-13z" fill="#999"/>
          <path d="M640 423h8c5 4 5 18 0 21h-8z" fill="#276d3a"/>
          <path d="M645 424l6 4M646 428l6 4M646 432l6 4M646 436l6 4M645 440l4 3" fill="none"/>
          <ellipse cx="640" cy="434" rx="6" ry="10" fill="#3c9152" stroke-dasharray="2 1"/>
          <path d="M630 434l9-1v4l-9 1z" fill="#ccc"/>
        </g>

        <!-- right drums and holder -->
        <g stroke="#111">
          <ellipse cx="681" cy="488" rx="4" ry="12" fill="#f4f4f4"/>
          <path d="M670 487l14-2v7l-14 2z" fill="#a9a4a0"/>
          <use href="#m-drum" x="636" y="474" width="36" height="36"/>
          <path d="M631 493l15-2v5l-15 1z" fill="#aca5a0"/>
          <use href="#m-drum" x="635" y="513" width="36" height="36"/>
          <path d="M671 523l11-1v8l-11 2z" fill="#b96018"/>
          <path d="M635 532l10-2v4l-10 1z" fill="#c06a20"/>
          <path d="M687 486L697 489 696 542 685 539z" fill="#857f73"/>
          <path d="M694 488v53" fill="none"/>
          <path d="M675 511C683 511 686 506 690 501V525C686 521 683 519 676 520z" fill="#857f73"/>
          <circle cx="671" cy="516" r="7" fill="#857f73"/>
          <circle cx="671" cy="516" r="4" fill="#ddd"/>
          <ellipse cx="690" cy="494" rx="2" ry="3" fill="#ccc"/>
          <ellipse cx="689" cy="533" rx="2" ry="3" fill="#ccc"/>
        </g>

        <!-- axis triad -->
        <g class="triad">
          <path d="M234 664V643" stroke="#1f7a2a" stroke-width="4"/>
          <path d="M229 645L234 635 239 645z" fill="#1f7a2a"/>
          <path d="M234 664L218 666" stroke="#1818b0" stroke-width="4"/>
          <path d="M220 661L209 666 220 671z" fill="#2a2ae0"/>
          <path d="M234 663L244 668" stroke="#8a1414" stroke-width="4"/>
          <circle cx="245" cy="669" r="4" fill="#c41818"/>
          <text x="230" y="634" fill="#1f8a1f">Y</text>
          <text x="201" y="672" fill="#1010e0">Z</text>
          <text x="246" y="676" fill="#f01010">X</text>
        </g>
      </svg>

      <div class="taskpane">
        <button class="active" aria-label="资源"><svg class="ico"><use href="#i-home"/></svg></button>
        <button aria-label="设计库"><svg class="ico"><use href="#i-books"/></svg></button>
        <button aria-label="文件探索器"><svg class="ico"><use href="#i-folder"/></svg></button>
        <button aria-label="视图调色板"><svg class="ico"><use href="#i-palette"/></svg></button>
        <button aria-label="外观、布景"><svg class="ico"><use href="#i-ball"/></svg></button>
        <button aria-label="自定义属性"><svg class="ico"><use href="#i-list"/></svg></button>
      </div>
    </div>
  </div>
</main>

<nav class="doc-tabs">
  <div class="steps">
    <button aria-label="第一个"><svg viewBox="0 0 12 12"><path d="M3 2v8M10 2L5 6l5 4z"/></svg></button>
    <button aria-label="上一个"><svg viewBox="0 0 12 12"><path d="M8 2L3 6l5 4z"/></svg></button>
    <button aria-label="下一个"><svg viewBox="0 0 12 12"><path d="M4 2l5 4-5 4z"/></svg></button>
    <button aria-label="最后一个"><svg viewBox="0 0 12 12"><path d="M9 2v8M2 2l5 4-5 4z"/></svg></button>
  </div>
  <a href="#" class="active">模型</a>
  <a href="#">3D 视图</a>
  <a href="#">运动算例 1</a>
</nav>

<footer class="status">
  <span>欠定义</span>
  <span>在编辑 装配体</span>
  <span>自定义</span>
</footer>

<script>
  const items = [
    ["plane", "右视基准面"],
    ["origin", "原点"],
    ["part", "(固定) 前挡板<1> (默认<<默认>"],
    ["part", "(-) 截断轴<1>->? (默认<<默认>"],
    ["asm", "(-) 前面截断<1> (默认<显示状态"],
    ["part", "(-) 57步进电机减速机<2> (默认"],
    ["part", "(-) 57步进电机减速机<3> (默认"],
    ["part", "(-) 57步进电机减速机<5> (默认"],
    ["part", "(-) 后挡板<2>->? (默认<<默认>"],
    ["part", "(-) 中间轴1<1>->? (默认<<默认>"],
    ["part", "(-) 中间轴2<1>->? (默认<<默认>"],
    ["part", "(-) 中间轴4<1>->? (默认<<默认>"],
    ["part", "(-) 中间轴4<2>->? (默认<<默认>"],
    ["part", "(-) 下轮<1> (默认<<默认>"],
    ["part", "(-) 下轮<2> (默认<<默认>"],
    ["part", "(-) 上轮<1> (默认<<默认>"],
    ["part", "(-) 上轮<2> (默认<<默认>"],
    ["part", "(-) 导向<1> (默认<<默认>"],
    ["part", "(-) 导向<2> (默认<<默认>"],
    ["part", "(-) 导轮<1> (默认<<默认>"],
    ["part", "(-) 导轮<2> (默认<<默认>"],
    ["part", "(-) 导轮<3> (默认<<默认>"],
    ["part", "(-) 导轮<4> (默认<<默认>"]
  ];

  // Chinese runs get their own span, they are set a little larger than the Latin text
  function label(text) {
    return text
      .replace(/</g, "&lt;")
      .replace(/>/g, "&gt;")
      .replace(/[\u4e00-\u9fff]+/g, run => `<span class="zh">${run}</span>`);
  }

  document.getElementById("tree").innerHTML = items.map(([icon, text], i) =>
    `<li class="${i > 1 ? "node" : ""}"><svg class="ico"><use href="#i-${icon}"/></svg>${label(text)}</li>`
  ).join("");
</script>

</body>
</html>
```
FILE: styles.css
```css
* {
  box-sizing: border-box;
}

body {
  margin: 0;
  height: 100vh;
  display: flex;
  flex-direction: column;
  overflow: hidden;
  background: #f7f7f7;
  color: #111;
  font-family: "Noto Sans CJK SC", sans-serif;
  font-size: 13px;
}

a {
  color: inherit;
  text-decoration: none;
}

button {
  padding: 0;
  border: none;
  background: none;
  color: inherit;
  font: inherit;
}

.sprite {
  position: absolute;
  width: 0;
  height: 0;
}

.ico {
  display: block;
  flex: none;
  width: 20px;
  height: 18px;
}

/* small triangle next to a button */
.drop {
  display: flex;
  align-items: center;
}

.drop::after {
  content: "";
  margin-left: 6px;
  border: 3px solid transparent;
  border-top: 4px solid #444;
  border-bottom: none;
}

/* Title bar, its upper part is scrolled off the window */
.titlebar {
  position: relative;
  flex: none;
  display: flex;
  align-items: flex-end;
  height: 17px;
  border-bottom: 1px solid #868686;
}

.brand {
  position: absolute;
  z-index: 2;
  left: 3px;
  bottom: -5px;
  display: flex;
  align-items: center;
  width: 145px;
  height: 34px;
  padding-left: 4px;
  border: 1px solid #888;
  background: linear-gradient(#fff 60%, #e2e2e2);
  color: #d9261c;
  font: italic 17px/20px "Liberation Sans", sans-serif;
}

.brand span {
  display: flex;
  align-items: baseline;
  padding-left: 3px;
}

.brand i {
  font: italic 400 15px/20px Lato, sans-serif;
}

.menu,
.quickbar {
  display: flex;
  align-items: center;
  height: 28px;
}

.menu {
  gap: 15px;
  width: 591px;
  padding-left: 176px;
  font-size: 12px;
  white-space: nowrap;
}

.menu a {
  min-width: 39px;
}

.menu button {
  margin-left: auto;
  padding-right: 6px;
}

.quickbar {
  flex: 1;
  gap: 6px;
  padding-left: 17px;
  border-left: 2px solid #999;
  background: #e6e6e6;
}

.quickbar .drop::after {
  margin-left: 6px;
}

.quickbar .pressed {
  height: 28px;
  padding: 0 3px;
  border: 1px solid #888;
  background: linear-gradient(to right, #b4b4b4 26px, #eee 26px);
}

.doc-name {
  flex: 1;
  text-align: center;
  font-size: 12px;
  white-space: nowrap;
}

.window-btns {
  display: flex;
  align-items: center;
  gap: 6px;
}

.help {
  padding: 0 10px 0 4px;
  color: #444;
  font-size: 17px;
}

/* Ribbon */
.ribbon {
  flex: none;
  display: flex;
  height: 87px;
  padding: 6px 0 3px;
  border-bottom: 1px solid #868686;
  background: #f7f7f7;
}

.group {
  display: flex;
  align-items: flex-start;
  border-right: 1px solid #c4c4c4;
}

.group:last-child {
  border-right: none;
}

.cmd {
  width: 49px;
  padding-top: 13px;
  line-height: 13px;
  white-space: nowrap;
  color: #000;
}

.cmd .ico {
  margin: 0 auto;
}

.tall {
  display: flex;
  flex-direction: column;
  align-items: center;
  padding-top: 5px;
}

.tall::after {
  content: "";
  margin-top: 16px;
  border: 3px solid transparent;
  border-top: 4px solid #333;
  border-bottom: none;
}

.first {
  width: 46px;
  padding-right: 5px;
}

.narrow { width: 38px; }
.wide { width: 62px; }
.addin { width: 91px; }
.widest { width: 100px; }

.latin {
  font-family: "Noto Sans", sans-serif;
  font-size: 11px;
}

.latin .zh {
  font-family: "Noto Sans CJK SC", sans-serif;
  font-size: 13px;
}

.cmd:disabled {
  color: #b4b4b4;
}

/* Workspace */
.workspace {
  position: relative;
  flex: 1;
  min-height: 0;
  display: flex;
  flex-direction: column;
  background:
    radial-gradient(ellipse 60% 52% at 22% 8%, #fff 50%, rgba(255, 255, 255, 0)),
    radial-gradient(ellipse 14% 40% at 100% 6%, #f0f1f4, rgba(240, 241, 244, 0)),
    radial-gradient(ellipse 40% 54% at 80% 30%, #d9dce9, rgba(217, 220, 233, 0)),
    linear-gradient(#fdfdfe, #f1f3f8 36%, #e0e4ef 53%, #f3f4f9 64%, #fff 74%, #fdfdfe 90%, #f7f8fb);
}

.cm-tabs {
  flex: none;
  display: flex;
  height: 22px;
}

.cm-tabs a {
  width: 56px;
  border-right: 1px solid #868686;
  border-bottom: 1px solid #868686;
  background: #d3d3d3;
  line-height: 20px;
  text-align: center;
  white-space: nowrap;
}

.cm-tabs a:first-child {
  width: 49px;
  padding-right: 8px;
}

.cm-tabs .long {
  width: 117px;
  font-size: 12px;
}

.cm-tabs .active {
  border-bottom: none;
  background: #f7f7f7;
  color: #555;
}

.heads-up {
  position: absolute;
  z-index: 1;
  top: 2px;
  left: 192px;
  right: 0;
  display: flex;
  justify-content: center;
  align-items: center;
  gap: 6px;
  height: 26px;
}

.heads-up .ico {
  opacity: 0.85;
}

.heads-up .drop::after {
  border-top-color: #888;
}

.heads-up .pressed {
  height: 26px;
  padding: 0 3px;
  border: 1px solid #999;
  background: linear-gradient(to right, #bcbcbc 25px, #f4f4f4 25px);
}

.doc-btns {
  position: absolute;
  z-index: 1;
  top: 6px;
  right: 7px;
  display: flex;
  gap: 6px;
  color: #888;
}

.columns {
  flex: 1;
  min-height: 0;
  display: flex;
}

/* Feature tree */
.sidebar {
  flex: none;
  display: flex;
  flex-direction: column;
  width: 194px;
  padding-right: 3px;
  border-right: 1px solid #777;
  background: #f7f7f7;
}

.grip {
  display: flex;
  align-items: center;
  justify-content: center;
  height: 16px;
  margin: 2px 0 4px;
  padding-right: 6px;
  border-top: 1px solid #c8c8c8;
  border-bottom: 1px solid #c8c8c8;
}

.grip span,
.handle span {
  width: 6px;
  height: 6px;
  border: 1px solid #999;
  border-radius: 50%;
  background: #ccc;
}

.panel-tabs {
  flex: none;
  display: flex;
  height: 26px;
  border-top: 1px solid #868686;
}

.panel-tabs button {
  flex: 1;
  display: flex;
  align-items: center;
  justify-content: center;
  border-right: 1px solid #868686;
  border-bottom: 1px solid #868686;
  background: #d3d3d3;
}

.panel-tabs .active {
  flex: none;
  width: 33px;
  padding-right: 5px;
  border-bottom: none;
  background: #f7f7f7;
}

.panel-tabs button:last-child {
  border-right: none;
}

.filter {
  flex: none;
  display: flex;
  height: 26px;
  border: 1px solid #c4c4c4;
  border-left: none;
}

.filter .ico {
  margin-left: -3px;
}

.filter .drop::after {
  margin-left: 0;
}

.tree-wrap {
  flex: 1;
  min-height: 0;
  display: flex;
}

.tree {
  flex: 1;
  min-width: 0;
  margin: 0;
  padding: 0;
  overflow: hidden;
  list-style: none;
  font-family: "DejaVu Sans", sans-serif;
  font-size: 11px;
  white-space: pre;
}

.tree .zh {
  font-family: "Noto Sans CJK SC", sans-serif;
  font-size: 12px;
}

.tree li {
  display: flex;
  align-items: center;
  height: 22px;
  padding-left: 5px;
}

.tree li::before {
  content: "";
  width: 13px;
}

.tree .node {
  padding-left: 1px;
}

.tree .node::before {
  width: 4px;
  margin-right: 13px;
  border: 4px solid transparent;
  border-left: 4px solid #555;
  border-right: none;
}

.tree .ico {
  margin-right: 3px;
}

.vscroll {
  display: flex;
  flex-direction: column;
  align-items: center;
  width: 12px;
  padding: 3px 0;
  background: #efefef;
}

.vscroll svg,
.hscroll svg {
  flex: none;
  width: 12px;
  height: 12px;
  fill: none;
  stroke: #555;
  stroke-width: 2;
}

.track {
  flex: 1;
  width: 100%;
  padding-top: 49px;
}

.track .thumb {
  height: 40%;
}

.thumb {
  background: #cdcdcd;
}

.hscroll {
  flex: none;
  display: flex;
  align-items: center;
  height: 17px;
  padding-right: 15px;
  background: #efefef;
}

.hscroll .thumb {
  width: 75px;
  height: 15px;
  margin-right: auto;
}

.hscroll svg:first-child {
  margin-right: -3px;
}

/* Graphics area */
.viewport {
  position: relative;
  flex: 1;
  min-width: 0;
}

.model {
  display: block;
  width: 100%;
  height: 100%;
}

.triad text {
  font: 10px "Liberation Serif", serif;
}

.handle {
  position: absolute;
  top: 267px;
  left: -1px;
  display: flex;
  align-items: center;
  justify-content: center;
  width: 9px;
  height: 40px;
  border: 1px solid #868686;
  border-left: none;
  background: #f7f7f7;
}

.taskpane {
  position: absolute;
  top: 54px;
  right: 0;
  width: 23px;
  border: 1px solid #868686;
  border-right: none;
}

.taskpane button {
  display: flex;
  align-items: center;
  width: 22px;
  height: 24px;
  padding-left: 2px;
  border-bottom: 1px solid #868686;
  background: #d3d3d3;
}

.taskpane .active {
  background: #f7f7f7;
}

.taskpane button:last-child {
  border-bottom: none;
}

/* Model tabs and status bar */
.doc-tabs {
  flex: none;
  display: flex;
  height: 16px;
  padding-left: 20px;
  border-top: 1px solid #868686;
  border-bottom: 1px solid #868686;
  overflow: hidden;
}

.doc-tabs a {
  padding: 0 8px 0 7px;
  border-right: 1px solid #868686;
  background: #d3d3d3;
  line-height: 11px;
  white-space: nowrap;
}

.doc-tabs a:last-child {
  padding-right: 14px;
}

.doc-tabs .active {
  padding: 0 8px 0 12px;
  background: #f7f7f7;
}

.steps {
  display: flex;
  width: 65px;
  background: #a8a8a8;
}

.steps button {
  flex: 1;
  border: 1px solid #999;
}

.steps svg {
  display: block;
  width: 12px;
  height: 12px;
  fill: #888;
  stroke: #888;
}

.status {
  flex: none;
  display: flex;
  justify-content: flex-end;
  gap: 16px;
  height: 6px;
  padding: 3px 118px 0 0;
  overflow: hidden;
  background: #e5e5e5;
  font-size: 12px;
  line-height: 16px;
}

.status span {
  padding: 0 10px;
  border-right: 1px solid #c8c8c8;
}
```
